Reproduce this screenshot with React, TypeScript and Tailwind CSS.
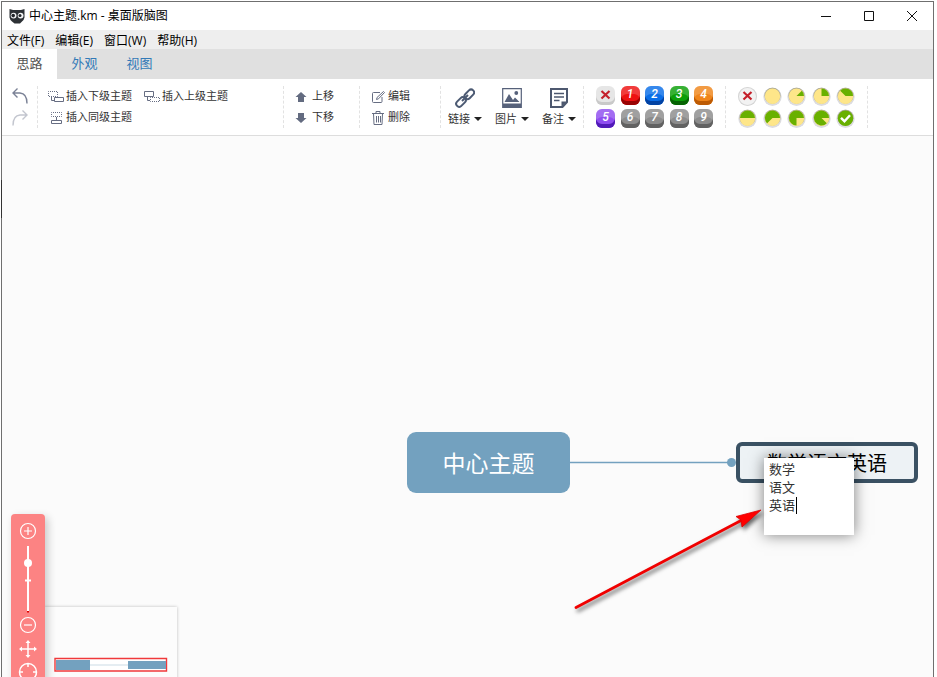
import React from 'react';

const menus = ['文件(F)', '编辑(E)', '窗口(W)', '帮助(H)'];

const priorities = [
  { label: '1', color: 'bg-[#ee1111] shadow-[inset_0_-4px_0_#990303,inset_0_8px_0_#ffffff2e]' },
  { label: '2', color: 'bg-[#0a6ee8] shadow-[inset_0_-4px_0_#0343a3,inset_0_8px_0_#ffffff2e]' },
  { label: '3', color: 'bg-[#0c9f08] shadow-[inset_0_-4px_0_#066303,inset_0_8px_0_#ffffff2e]' },
  { label: '4', color: 'bg-[#f0851a] shadow-[inset_0_-4px_0_#bd5b04,inset_0_8px_0_#ffffff2e]' },
  { label: '5', color: 'bg-[#8f4df0] shadow-[inset_0_-4px_0_#511bb8,inset_0_8px_0_#ffffff2e]' },
  { label: '6', color: 'bg-[#8c8c8c] shadow-[inset_0_-4px_0_#626262,inset_0_8px_0_#ffffff2e]' },
  { label: '7', color: 'bg-[#8c8c8c] shadow-[inset_0_-4px_0_#626262,inset_0_8px_0_#ffffff2e]' },
  { label: '8', color: 'bg-[#8c8c8c] shadow-[inset_0_-4px_0_#626262,inset_0_8px_0_#ffffff2e]' },
  { label: '9', color: 'bg-[#8c8c8c] shadow-[inset_0_-4px_0_#626262,inset_0_8px_0_#ffffff2e]' },
];

// every slice starts at three o'clock and grows anticlockwise
const progress = [
  { name: '未开始', slice: '' },
  { name: '1/8', slice: 'M9.5 9H17A7.5 7.5 0 0 0 14.8 3.7Z' },
  { name: '1/4', slice: 'M9.5 9V1.5A7.5 7.5 0 0 1 17 9Z' },
  { name: '3/8', slice: 'M9.5 9H17A7.5 7.5 0 0 0 4.2 3.7Z' },
  { name: '1/2', slice: 'M2 9A7.5 7.5 0 0 1 17 9Z' },
  { name: '5/8', slice: 'M9.5 9H17A7.5 7.5 0 1 0 4.2 14.3Z' },
  { name: '3/4', slice: 'M9.5 9H17A7.5 7.5 0 1 0 9.5 16.5Z' },
  { name: '7/8', slice: 'M9.5 9H17A7.5 7.5 0 1 0 14.8 14.3Z' },
];

function OwlIcon() {
  return (
    <svg className="w-4 h-4" viewBox="0 0 16 16">
      <path d="M.5 1 4 2H12L15.5 1V9.500Q15 12 13 13.500L11 15.500H5.500L3 13.500Q1 12 .5 9.500Z" fill="#2d3135" />
      <circle cx="4.600" cy="7.600" r="2.900" fill="#f4f5f6" />
      <circle cx="11.600" cy="7.600" r="2.900" fill="#f4f5f6" />
      <circle cx="4.200" cy="7.600" r="1.800" fill="#202428" />
      <circle cx="11" cy="7.600" r="1.500" fill="#202428" />
    </svg>
  );
}

function UndoIcon({ redo = false }: { redo?: boolean }) {
  return (
    <svg className="w-4 h-4" viewBox="0 0 16 16" fill="none" stroke={redo ? '#c3c6cf' : '#7b8296'} strokeWidth="1.4">
      {redo ? (
        <path d="M10.500.5 15 5 10.500 9.500M15 5H8Q1 5.500 1 15.500" />
      ) : (
        <path d="M5.500.5 1 5 5.500 9.500M1 5H8Q15 5.500 15 15.500" />
      )}
    </svg>
  );
}

function ChildIcon() {
  return (
    <svg className="w-4 h-4" viewBox="0 0 16 16" fill="none" stroke="#666d82">
      <path d="M.5 2.500H9.500V7.500H.5Z" strokeDasharray="1 1" strokeDashoffset=".5" />
      <path d="M3.500 8V11.500H6M6.500 8.500H15.500V12.500H6.500Z" />
    </svg>
  );
}

function ParentIcon() {
  return (
    <svg className="w-4 h-4" viewBox="0 0 16 16" fill="none" stroke="#666d82">
      <path d="M.5 2.500H9.500V7.500H.5ZM3.500 8V11.500H6" />
      <path d="M6.500 8.500H15.500V12.500H6.500Z" strokeDasharray="1 1" strokeDashoffset=".5" />
    </svg>
  );
}

function SiblingIcon() {
  return (
    <svg className="w-4 h-4" viewBox="0 0 16 16" fill="none" stroke="#666d82">
      <path d="M3.500 2.500H13.500V6.500H3.500Z" strokeDasharray="1 1" strokeDashoffset=".5" />
      <path d="M3.500 10.500H13.500V13.500H3.500ZM8.500 7V10" />
    </svg>
  );
}

function ArrowIcon({ down = false }: { down?: boolean }) {
  return (
    <svg className="w-3 h-3" viewBox="0 0 12 12" fill="#636b80">
      {down ? <path d="M3 1H9V6H11.500L6 11 .5 6H3Z" /> : <path d="M6 1 11.500 6H9V11H3V6H.5Z" />}
    </svg>
  );
}

function EditIcon() {
  return (
    <svg className="w-3.5 h-3.5" viewBox="0 0 14 14" fill="none" stroke="#666d82">
      <path d="M8 2.500H1.500Q.5 2.500.5 3.500V11.500Q.5 12.500 1.500 12.500H9Q10 12.500 10 11.500V7" />
      <path d="M4.500 9.500 5 7.500 11.500 1.500 12.500 2.500 6.500 8.800Z" />
    </svg>
  );
}

function TrashIcon() {
  return (
    <svg className="w-3.5 h-3.5" viewBox="0 0 14 14" fill="none" stroke="#666d82">
      <path d="M0 2.500H12M4 2.500V.5H8V2.500M1.500 2.500 2 13.500H10L10.500 2.500M4.500 5V11.500M6.500 5V11.500M8.500 5V11.500" />
    </svg>
  );
}

function LinkIcon() {
  return (
    <svg className="w-5 h-5" viewBox="0 0 20 20" fill="none" stroke="#4c5a73" strokeWidth="2">
      <rect x="8.800" y="3.300" width="11" height="6" rx="3" transform="rotate(-45 14.300 6.300)" />
      <rect x=".5" y="11" width="11" height="6" rx="3" transform="rotate(-45 6 14)" />
      <path d="M7 13 13 7" />
    </svg>
  );
}

function ImageIcon() {
  return (
    <svg className="w-5 h-5" viewBox="0 0 20 20" fill="#56617a">
      <path d="M.7.7H19.300V19.300H.7Z" fill="none" stroke="#56617a" strokeWidth="1.200" />
      <path d="M2.500 14 7 6 11 12 13 9.500 17.500 14ZM1 15.500H19V19H1Z" />
      <circle cx="14.300" cy="5" r="1.900" />
    </svg>
  );
}

function NoteIcon() {
  return (
    <svg className="w-5 h-5" viewBox="0 0 20 20" fill="none" stroke="#4d586f" strokeWidth="2">
      <path d="M2 1H18V14L13.500 19H2Z" />
      <path d="M5 5.500H15M5 9H15M5 12.500H10.500" strokeWidth="1.500" />
      <path d="M12.500 19V13.500H18Z" fill="#4d586f" stroke="none" />
    </svg>
  );
}

function Cross() {
  return (
    <svg className="w-[19px] h-[19px]" viewBox="0 0 19 19">
      <path d="M5.500 5 13.500 12.500M13.500 5 5.500 12.500" stroke="#c4202b" strokeWidth="2.200" />
    </svg>
  );
}

function ProgressIcon({ slice, done = false }: { slice: string; done?: boolean }) {
  return (
    <svg className="w-[19px] h-[19px]" viewBox="0 0 19 19">
      <circle cx="9.500" cy="9.700" r="9.200" fill="#dcdcdf" />
      <circle cx="9.500" cy="8.700" r="8" fill="#a8a68f" />
      <circle cx="9.500" cy="9.200" r="7.700" fill={done ? '#69b000' : '#fee689'} />
      <path d={slice} fill="#69b000" />
      {done && <path d="M5 8.800 8.500 12.300 14 6.300" fill="none" stroke="#fff" strokeWidth="2.400" />}
    </svg>
  );
}

function ToolButton({ icon, text }: { icon: React.ReactNode; text: string }) {
  return (
    <button className="flex items-center gap-0.5 h-[21px] whitespace-nowrap">
      {icon}
      {text}
    </button>
  );
}

function MenuButton({ icon, text }: { icon: React.ReactNode; text: string }) {
  return (
    <button className="flex flex-col items-center justify-between w-9 pt-0.5">
      {icon}
      <span className="flex items-center gap-1 leading-[18px]">
        {text}
        <svg className="w-2 h-1" viewBox="0 0 8 4" fill="#222">
          <path d="M0 0H8L4 4Z" />
        </svg>
      </span>
    </button>
  );
}

export default function App() {
  return (
    <div className="h-screen bg-white pl-px pt-px pr-[3px] overflow-hidden font-['Open_Sans','Noto_Sans_CJK_SC',sans-serif] text-[11px] text-black">
      <div className="relative flex flex-col h-full border-t border-x border-[#6f6f6f]">
        <div className="absolute -left-px top-[178px] w-px h-[38px] bg-[#333]" />

        <header className="flex items-center h-7 shrink-0 bg-white pl-[7px] gap-1">
          <OwlIcon />
          <h1 className="flex-1 whitespace-nowrap text-[12px]">中心主题.km - 桌面版脑图</h1>
          <div className="flex shrink-0">
            <button aria-label="最小化" className="flex items-center justify-center w-[43px] h-7">
              <svg className="w-2.5 h-2.5" viewBox="0 0 10 10" stroke="#111"><path d="M0 5.500H10" /></svg>
            </button>
            <button aria-label="最大化" className="flex items-center justify-center w-[43px] h-7">
              <svg className="w-2.5 h-2.5" viewBox="0 0 10 10" fill="none" stroke="#111"><path d="M.5.5H9.500V9.500H.5Z" /></svg>
            </button>
            <button aria-label="关闭" className="flex items-center justify-center w-[43px] h-7">
              <svg className="w-2.5 h-2.5" viewBox="0 0 10 10" stroke="#111"><path d="M0 0 10 10M10 0 0 10" /></svg>
            </button>
          </div>
        </header>

        <nav className="flex items-center h-[19px] shrink-0 bg-[#eeeeee] pt-0.5 pl-[5px] gap-[11px] text-[12px]">
          {menus.map((menu) => (
            <button key={menu} className="whitespace-nowrap">{menu}</button>
          ))}
        </nav>

        <nav className="flex h-[30px] shrink-0 bg-[#e0e0e0] text-[13px] text-[#337ab7]">
          <a href="#idea" className="flex items-center justify-center w-[55px] bg-white text-[#555]">思路</a>
          <a href="#appearance" className="flex items-center justify-center w-[55px]">外观</a>
          <a href="#view" className="flex items-center justify-center w-[55px]">视图</a>
        </nav>

        <div className="flex shrink-0 h-[57px] py-[7px] bg-white border-b border-[#dddddd] text-[#333]">
          <div className="flex flex-col items-center justify-between w-9 py-0.5 border-r border-dashed border-[#e2e2e2]">
            <button aria-label="撤销"><UndoIcon /></button>
            <button aria-label="重做"><UndoIcon redo /></button>
          </div>

          <div className="w-[246px] pl-2.5 border-r border-dashed border-[#e2e2e2]">
            <div className="flex gap-3">
              <ToolButton icon={<ChildIcon />} text="插入下级主题" />
              <ToolButton icon={<ParentIcon />} text="插入上级主题" />
            </div>
            <ToolButton icon={<SiblingIcon />} text="插入同级主题" />
          </div>

          <div className="w-[76px] pl-[11px] border-r border-dashed border-[#e2e2e2]">
            <button className="flex items-center gap-[5px] h-[21px]"><ArrowIcon />上移</button>
            <button className="flex items-center gap-[5px] h-[21px]"><ArrowIcon down />下移</button>
          </div>

          <div className="w-[81px] pl-3 border-r border-dashed border-[#e2e2e2]">
            <ToolButton icon={<EditIcon />} text="编辑" />
            <ToolButton icon={<TrashIcon />} text="删除" />
          </div>

          <div className="flex w-[143px] pl-1.5 gap-[11px] border-r border-dashed border-[#e2e2e2]">
            <MenuButton icon={<LinkIcon />} text="链接" />
            <MenuButton icon={<ImageIcon />} text="图片" />
            <MenuButton icon={<NoteIcon />} text="备注" />
          </div>

          <div className="grid grid-cols-[repeat(5,19px)] justify-between content-between w-[142px] px-3 border-r border-dashed border-[#e2e2e2]">
            <button aria-label="移除优先级" className="h-[19px] rounded-[6px] bg-[#e6e6e6] shadow-[inset_0_-3px_0_#c9c9c9]">
              <Cross />
            </button>
            {priorities.map((item) => (
              <button
                key={item.label}
                className={`h-[19px] rounded-[6px] pb-[3px] font-['Roboto',sans-serif] text-[12px] leading-4 italic font-medium text-white ${item.color}`}
              >
                {item.label}
              </button>
            ))}
          </div>

          <div className="grid grid-cols-[repeat(5,19px)] justify-between content-between w-[142px] px-3 pt-px border-r border-dashed border-[#e2e2e2]">
            <button aria-label="移除进度" className="h-[19px] rounded-full bg-[#f2f2f2] shadow-[inset_0_0_0_1px_#d4d4d4]">
              <Cross />
            </button>
            {progress.map((item) => (
              <button key={item.name} aria-label={item.name}><ProgressIcon slice={item.slice} /></button>
            ))}
            <button aria-label="已完成"><ProgressIcon slice="" done /></button>
          </div>
        </div>

        <main className="relative flex-1 overflow-hidden bg-[#fbfbfb]">
          {/* connector between the root topic and its child */}
          <svg className="absolute left-[568px] top-[320px] w-[170px] h-3" viewBox="0 0 170 12">
            <path d="M0 6.500H162" stroke="#73a1bf" strokeWidth="1.600" />
            <circle cx="161.500" cy="6.500" r="4.500" fill="#73a1bf" />
          </svg>
          <div className="absolute left-[405px] top-[296px] flex items-center justify-center w-[163px] h-[61px] pt-0.5 rounded-[9px] bg-[#73a1bf] text-[23px] text-white">
            中心主题
          </div>
          <div className="absolute left-[734px] top-[306px] flex items-center justify-center w-[182px] h-[41px] pt-0.5 rounded-[6px] border-4 border-[#3a5163] bg-[#edf2f5] text-[20px] whitespace-nowrap">
            数学语文英语
          </div>

          <textarea
            aria-label="编辑主题"
            defaultValue={'数学\n语文\n英语'}
            className="absolute left-[762px] top-[322px] w-[90px] h-[77px] resize-none bg-white px-[5px] py-0.5 text-[13px] leading-[18px] text-[#333] outline-none shadow-[0_0_14px_#00000080]"
          />
          <div className="absolute left-[794px] top-[361px] w-px h-[17px] bg-black" />

          <svg className="absolute left-[568px] top-[364px] w-[200px] h-[120px] drop-shadow-[2px_3px_2px_#00000099]" viewBox="0 0 200 120">
            <path d="M6 107.500 172 20" stroke="#f00000" strokeWidth="2.800" strokeLinecap="round" />
            <path d="M191 10 166 16.500 171 20 172 27Z" fill="#f00" stroke="#d00" strokeWidth=".8" />
          </svg>

          {/* overview panel */}
          <div className="absolute left-[42px] top-[471px] w-[133px] h-[100px] bg-[#fcfcfc] shadow-[0_0_3px_#00000040]">
            <svg className="absolute left-2.5 top-[50px] w-[114px] h-4" viewBox="0 0 114 16">
              <path d="M1 1.500H112.500V14H1Z" fill="#fff" stroke="#f0393b" strokeWidth="1.400" />
              <path d="M36 8H74" stroke="#dce7ee" strokeWidth="1.500" />
              <path d="M2 3H36V13H2ZM74 4H112V12H74Z" fill="#73a1bf" />
            </svg>
          </div>

          {/* zoom and navigation bar */}
          <div className="absolute left-[9px] top-[378px] flex flex-col items-center w-[34px] h-[190px] pt-2 rounded-[4px] bg-[#fc8383] shadow-[3px_3px_8px_#00000033]">
            <button aria-label="放大">
              <svg className="w-[18px] h-[18px]" viewBox="0 0 18 18" fill="none" stroke="#fff" strokeWidth="1.200">
                <circle cx="9" cy="9" r="7.500" />
                <path d="M5 9H13M9 5V13" />
              </svg>
            </button>
            <svg className="w-[18px] h-[76px]" viewBox="0 0 18 76" fill="#fff">
              <path d="M8 6H10V71H8ZM6 39.500H12V41.500H6Z" />
              <circle cx="9" cy="23" r="4" />
              <path d="M8 71H10V72.500H8Z" fill="#d00" />
            </svg>
            <button aria-label="缩小">
              <svg className="w-[18px] h-[18px]" viewBox="0 0 18 18" fill="none" stroke="#fff" strokeWidth="1.200">
                <circle cx="9" cy="9" r="7.500" />
                <path d="M5 9H13" />
              </svg>
            </button>
            <button aria-label="拖动画布" className="mt-1.5">
              <svg className="w-[18px] h-[18px]" viewBox="0 0 18 18" fill="#fff" stroke="#fff" strokeWidth="1.500">
                <path d="M9 2V16M2 9H16" />
                <path d="M9 0 6.500 3H11.500ZM9 18 6.500 15H11.500ZM0 9 3 6.500V11.500ZM18 9 15 6.500V11.500Z" stroke="none" />
              </svg>
            </button>
            <button aria-label="定位根节点" className="mt-1">
              <svg className="w-5 h-5" viewBox="0 0 20 20" fill="none" stroke="#fff" strokeWidth="1.500">
                <circle cx="10" cy="10" r="8.500" />
                <path d="M10 1V5M10 15V19M1 10H5M15 10H19" />
              </svg>
            </button>
          </div>
        </main>
      </div>
    </div>
  );
}
